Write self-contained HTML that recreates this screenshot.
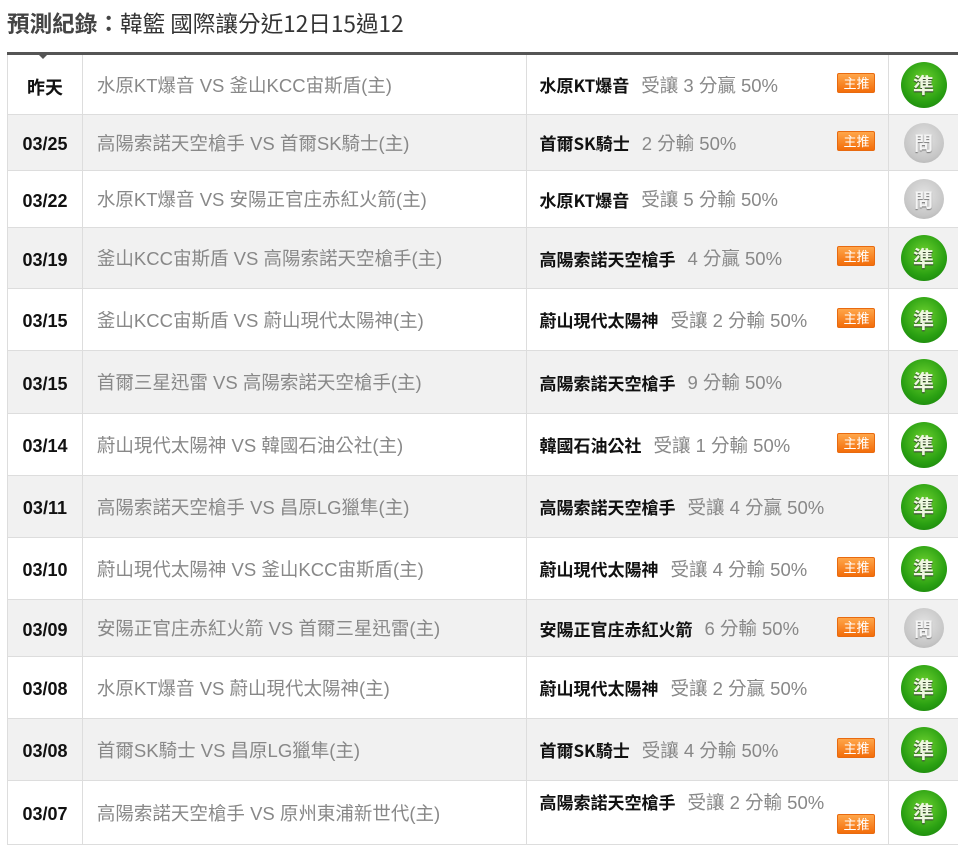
<!DOCTYPE html>
<html><head><meta charset="utf-8"><style>
body{margin:0;width:958px;height:833px;overflow:hidden;background:#fff;font-family:"Liberation Sans","Noto Sans CJK TC",sans-serif;}
h1{margin:0;position:absolute;left:7px;top:8px;font-size:22.6px;font-weight:normal;color:#333;font-family:"Noto Sans CJK TC",sans-serif;line-height:30px}
h1 b{color:#444}
.tbl{position:absolute;left:7px;top:52px;width:951px;border-top:3px solid #555;}
.tri{position:absolute;left:36px;top:52px;width:0;height:0;border-left:7px solid transparent;border-right:7px solid transparent;border-top:7px solid #555;}
.row{display:flex;border-bottom:1px solid #ddd;border-left:1px solid #ddd;box-sizing:border-box}
.row.g{background:#f1f1f1}
.c{display:flex;align-items:center;box-sizing:border-box;position:relative}
.d{width:75px;justify-content:center;font-weight:bold;font-size:18px;color:#111;border-right:1px solid #ddd;padding-top:4px}
.m{width:445px;padding-left:14px;font-size:18.5px;color:#888;border-right:1px solid #ddd}
.p{width:362px;padding-left:12px;font-size:18.5px;color:#888;border-right:1px solid #ddd}
.p b{color:#111;font-size:17px;margin-right:12px;font-family:"Noto Sans CJK TC",sans-serif}
.r{width:69px;justify-content:center}
.bd{position:absolute;left:310px;width:38px;height:20px;border-radius:2px;background:linear-gradient(#ffa64a,#f36d0a);color:#fff;font-size:13px;text-align:center;line-height:19px;border:1px solid #e86a10;box-sizing:border-box}
.ok{width:46px;height:46px;border-radius:50%;background:radial-gradient(circle at 50% 40%,#6ed230,#2aa012 60%,#137a0a);color:#eef8e0;font-size:21px;font-weight:bold;display:flex;align-items:center;justify-content:center;text-shadow:0 1px 1px #333}
.no{width:40px;height:40px;border-radius:50%;background:radial-gradient(circle at 50% 40%,#e4e4e4,#c6c6c6 65%,#a8a8a8);color:#f4f4f4;font-size:19px;font-weight:bold;display:flex;align-items:center;justify-content:center;text-shadow:0 1px 1px #777}
</style></head><body>
<h1><b>預測紀錄：</b>韓籃 國際讓分近12日15過12</h1>
<div class="tri"></div>
<div class="tbl">
<div class="row" style="height:60px"><div class="c d">昨天</div><div class="c m">水原KT爆音 VS 釜山KCC宙斯盾(主)</div><div class="c p"><b>水原KT爆音</b>受讓 3 分贏 50%<span class="bd" style="top:18px">主推</span></div><div class="c r"><div class="ok">準</div></div></div>
<div class="row g" style="height:56px"><div class="c d">03/25</div><div class="c m">高陽索諾天空槍手 VS 首爾SK騎士(主)</div><div class="c p"><b>首爾SK騎士</b>2 分輸 50%<span class="bd" style="top:16px">主推</span></div><div class="c r"><div class="no">問</div></div></div>
<div class="row" style="height:57px"><div class="c d">03/22</div><div class="c m">水原KT爆音 VS 安陽正官庄赤紅火箭(主)</div><div class="c p"><b>水原KT爆音</b>受讓 5 分輸 50%</div><div class="c r"><div class="no">問</div></div></div>
<div class="row g" style="height:61px"><div class="c d">03/19</div><div class="c m">釜山KCC宙斯盾 VS 高陽索諾天空槍手(主)</div><div class="c p"><b>高陽索諾天空槍手</b>4 分贏 50%<span class="bd" style="top:18px">主推</span></div><div class="c r"><div class="ok">準</div></div></div>
<div class="row" style="height:62px"><div class="c d">03/15</div><div class="c m">釜山KCC宙斯盾 VS 蔚山現代太陽神(主)</div><div class="c p"><b>蔚山現代太陽神</b>受讓 2 分輸 50%<span class="bd" style="top:19px">主推</span></div><div class="c r"><div class="ok">準</div></div></div>
<div class="row g" style="height:63px"><div class="c d">03/15</div><div class="c m">首爾三星迅雷 VS 高陽索諾天空槍手(主)</div><div class="c p"><b>高陽索諾天空槍手</b>9 分輸 50%</div><div class="c r"><div class="ok">準</div></div></div>
<div class="row" style="height:62px"><div class="c d">03/14</div><div class="c m">蔚山現代太陽神 VS 韓國石油公社(主)</div><div class="c p"><b>韓國石油公社</b>受讓 1 分輸 50%<span class="bd" style="top:19px">主推</span></div><div class="c r"><div class="ok">準</div></div></div>
<div class="row g" style="height:62px"><div class="c d">03/11</div><div class="c m">高陽索諾天空槍手 VS 昌原LG獵隼(主)</div><div class="c p"><b>高陽索諾天空槍手</b>受讓 4 分贏 50%</div><div class="c r"><div class="ok">準</div></div></div>
<div class="row" style="height:62px"><div class="c d">03/10</div><div class="c m">蔚山現代太陽神 VS 釜山KCC宙斯盾(主)</div><div class="c p"><b>蔚山現代太陽神</b>受讓 4 分輸 50%<span class="bd" style="top:19px">主推</span></div><div class="c r"><div class="ok">準</div></div></div>
<div class="row g" style="height:57px"><div class="c d">03/09</div><div class="c m">安陽正官庄赤紅火箭 VS 首爾三星迅雷(主)</div><div class="c p"><b>安陽正官庄赤紅火箭</b>6 分輸 50%<span class="bd" style="top:17px">主推</span></div><div class="c r"><div class="no">問</div></div></div>
<div class="row" style="height:62px"><div class="c d">03/08</div><div class="c m">水原KT爆音 VS 蔚山現代太陽神(主)</div><div class="c p"><b>蔚山現代太陽神</b>受讓 2 分贏 50%</div><div class="c r"><div class="ok">準</div></div></div>
<div class="row g" style="height:62px"><div class="c d">03/08</div><div class="c m">首爾SK騎士 VS 昌原LG獵隼(主)</div><div class="c p"><b>首爾SK騎士</b>受讓 4 分輸 50%<span class="bd" style="top:19px">主推</span></div><div class="c r"><div class="ok">準</div></div></div>
<div class="row" style="height:64px"><div class="c d">03/07</div><div class="c m">高陽索諾天空槍手 VS 原州東浦新世代(主)</div><div class="c p" style="align-items:flex-start;padding-top:8px"><b>高陽索諾天空槍手</b>受讓 2 分輸 50%<span class="bd" style="top:33px">主推</span></div><div class="c r"><div class="ok">準</div></div></div>
</div>
</body></html>
